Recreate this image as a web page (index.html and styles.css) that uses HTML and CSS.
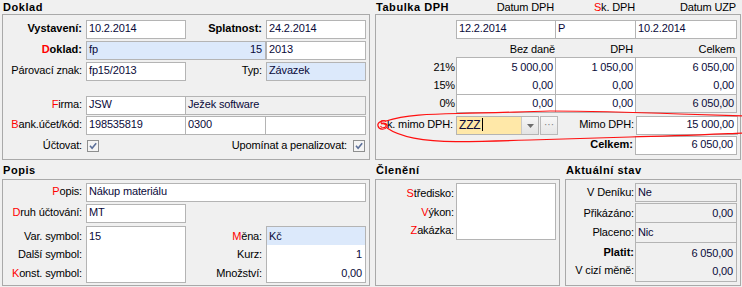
FILE: index.html
```html
<!DOCTYPE HTML>
<html lang="cs">
<head>
    <meta charset="utf-8" />
    <title>Doklad</title>
    <link rel="stylesheet" href="styles.css">
</head>
<body>
    <div class="form">
        <div class="band band-top">
            <section class="panel doklad">
                <div class="ptitle">Doklad</div>
                <div class="pbox">
                    <div class="fr r1">
                        <span class="lb lb-main b">Vystavení:</span>
                        <span class="in w100">10.2.2014</span>
                        <span class="lb lb-mid b">Splatnost:</span>
                        <span class="in w100">24.2.2014</span>
                    </div>
                    <div class="fr">
                        <span class="lb lb-main b"><em>D</em>oklad:</span>
                        <span class="in blue w180 split"><span>fp</span><span>15</span></span>
                        <span class="in w100">2013</span>
                    </div>
                    <div class="fr">
                        <span class="lb lb-main">Párovací znak:</span>
                        <span class="in w100">fp15/2013</span>
                        <span class="lb lb-mid">Typ:</span>
                        <span class="in blue w100">Závazek</span>
                    </div>
                    <div class="fr r-firma">
                        <span class="lb lb-main"><em>F</em>irma:</span>
                        <span class="in w100">JSW</span>
                        <span class="in ro join w181">Ježek software</span>
                    </div>
                    <div class="fr r-bank">
                        <span class="lb lb-main"><em>B</em>ank.účet/kód:</span>
                        <span class="in w100">198535819</span>
                        <span class="in join w81">0300</span>
                        <span class="in join w101"></span>
                    </div>
                    <div class="fr r-check">
                        <span class="lb lb-main">Účtovat:</span>
                        <span class="chk"><svg width="12" height="12" viewBox="0 0 12 12"><rect x="0.5" y="0.5" width="11" height="11" fill="#f4f4f4" stroke="#8e8f8f"/><path d="M3 5.8 L5.1 8.3 L9.2 3.2" fill="none" stroke="#5b6f99" stroke-width="1.6"/></svg></span>
                        <span class="lb grow">Upomínat a penalizovat:</span>
                        <span class="chk chk-end"><svg width="12" height="12" viewBox="0 0 12 12"><rect x="0.5" y="0.5" width="11" height="11" fill="#f4f4f4" stroke="#8e8f8f"/><path d="M3 5.8 L5.1 8.3 L9.2 3.2" fill="none" stroke="#5b6f99" stroke-width="1.6"/></svg></span>
                    </div>
                </div>
            </section>

            <section class="panel dph">
                <div class="ptitle dph-head">
                    <span class="c0">Tabulka DPH</span>
                    <span class="c1 h">Datum DPH</span>
                    <span class="c2 h"><em>S</em>k. DPH</span>
                    <span class="c3 h">Datum UZP</span>
                </div>
                <div class="pbox">
                    <div class="fr r1">
                        <span class="sp80"></span>
                        <span class="in w100">12.2.2014</span>
                        <span class="in join w81">P</span>
                        <span class="in join w102">10.2.2014</span>
                    </div>
                    <div class="colh">
                        <span class="sp80"></span>
                        <span class="c1">Bez daně</span>
                        <span class="c2">DPH</span>
                        <span class="c3">Celkem</span>
                    </div>
                    <div class="vrow first">
                        <span class="vl">21%</span>
                        <span class="vc c1">5 000,00</span>
                        <span class="vc c2">1 050,00</span>
                        <span class="vc c3">6 050,00</span>
                    </div>
                    <div class="vrow">
                        <span class="vl">15%</span>
                        <span class="vc c1">0,00</span>
                        <span class="vc c2">0,00</span>
                        <span class="vc c3">0,00</span>
                    </div>
                    <div class="vrow zero">
                        <span class="vl">0%</span>
                        <span class="vc c1">0,00</span>
                        <span class="vc c2">0,00</span>
                        <span class="vc c3 ro">6 050,00</span>
                    </div>
                    <div class="fr r-mimo">
                        <span class="lb lb-sk"><em>S</em>k. mimo DPH:</span>
                        <span class="combo">
                            <span class="combo-text">ZZZ<i class="caret"></i></span>
                            <span class="combo-btn"><svg width="7" height="4" viewBox="0 0 7 4"><path d="M0 0 H7 L3.5 4 Z" fill="#6d6d6d"/></svg></span>
                        </span>
                        <span class="dots">···</span>
                        <span class="lb lb-mimo">Mimo DPH:</span>
                        <span class="in w102 num">15 000,00</span>
                    </div>
                    <div class="fr r-celk">
                        <span class="lb lb-celk b">Celkem:</span>
                        <span class="in w102 num">6 050,00</span>
                    </div>
                </div>
            </section>
        </div>

        <div class="band band-bottom">
            <section class="panel popis">
                <div class="ptitle">Popis</div>
                <div class="pbox">
                    <div class="fr r-popis">
                        <span class="lb lb-main"><em>P</em>opis:</span>
                        <span class="in w280">Nákup materiálu</span>
                    </div>
                    <div class="fr r-druh">
                        <span class="lb lb-main"><em>D</em>ruh účtování:</span>
                        <span class="in w100">MT</span>
                    </div>
                    <div class="symbols">
                        <div class="lines lb-main">
                            <span>Var. symbol:</span>
                            <span>Další symbol:</span>
                            <span><em>K</em>onst. symbol:</span>
                        </div>
                        <div class="mbox w100">
                            <span>15</span>
                            <span></span>
                            <span></span>
                        </div>
                        <div class="lines lb-mid">
                            <span><em>M</em>ěna:</span>
                            <span>Kurz:</span>
                            <span>Množství:</span>
                        </div>
                        <div class="mbox w100">
                            <span class="blue">Kč</span>
                            <span class="num">1</span>
                            <span class="num">0,00</span>
                        </div>
                    </div>
                </div>
            </section>

            <section class="panel cleneni">
                <div class="ptitle">Členění</div>
                <div class="pbox">
                    <div class="symbols r-clen">
                        <div class="lines lb-80">
                            <span><em>S</em>tředisko:</span>
                            <span><em>V</em>ýkon:</span>
                            <span><em>Z</em>akázka:</span>
                        </div>
                        <div class="mbox w100 h57"></div>
                    </div>
                </div>
            </section>

            <section class="panel stav">
                <div class="ptitle">Aktuální stav</div>
                <div class="pbox">
                    <div class="fr s1">
                        <span class="lb lb-69">V Deníku:</span>
                        <span class="in ro w102">Ne</span>
                    </div>
                    <div class="fr s2">
                        <span class="lb lb-69">Přikázáno:</span>
                        <span class="in ro w102 num">0,00</span>
                    </div>
                    <div class="fr s3">
                        <span class="lb lb-69">Placeno:</span>
                        <span class="in ro w102">Nic</span>
                    </div>
                    <div class="fr s4">
                        <div class="lines lb-69">
                            <span class="b">Platit:</span>
                            <span>V cizí měně:</span>
                        </div>
                        <div class="mbox ro w102">
                            <span class="num">6 050,00</span>
                            <span class="num">0,00</span>
                        </div>
                    </div>
                </div>
            </section>
        </div>

        <!-- red hand-drawn mark over the "mimo DPH" row -->
        <svg class="mark" width="742" height="287" viewBox="0 0 742 287">
            <path d="M386 121 C 405 115, 430 114, 458 113.5 C 500 113, 520 111.5, 550 111 C 600 111, 640 112.5, 680 114 C 710 115, 730 115.5, 745 116"/>
            <path d="M745 133 C 720 134, 680 136, 630 137 C 590 138, 560 139, 530 140 C 500 141, 475 141.5, 456 141.7 C 425 141.5, 400 137, 387 128"/>
            <path d="M386 121 C 381 120, 377 123, 378 126 C 379 130, 385 130, 387 127 C 388 124, 384 122, 381 124"/>
        </svg>
    </div>
</body>
</html>
```

FILE: styles.css
```css
body {
    margin: 0;
    background-color: #f0f0f0;
    font-family: "Liberation Sans", Arial, sans-serif;
    font-size: 11px;
    letter-spacing: -0.15px;
    color: #000;
}

em {
    font-style: normal;
    color: #ff0000;
}

.b {
    font-weight: bold;
    letter-spacing: 0;
}

.form {
    position: relative;
    width: 742px;
    height: 287px;
    padding-left: 2px;
    box-sizing: border-box;
    overflow: hidden;
}

.band {
    display: flex;
    gap: 5px;
}

.band-top {
    height: 160px;
}

.panel {
    display: flex;
    flex-direction: column;
    box-sizing: border-box;
}

.ptitle {
    height: 14px;
    line-height: 14px;
    padding-left: 1px;
    font-weight: bold;
    letter-spacing: 0.55px;
    white-space: nowrap;
}

.band-bottom .ptitle {
    height: 14px;
    margin-top: 3px;
    margin-bottom: 2px;
}

.pbox {
    border: 1px solid #a9a9a9;
    box-sizing: border-box;
    flex: 1;
}

.doklad, .popis { width: 368px; }
.dph { width: 366px; }
.cleneni { width: 185px; }
.stav { width: 176px; }

.doklad .pbox, .dph .pbox { height: 146px; flex: none; }
.band-bottom .pbox { height: 107px; flex: none; }

/* form rows */
.fr {
    display: flex;
    height: 19px;
    margin-top: 2px;
}

.fr.r1 { margin-top: 5px; }
.r-firma { margin-top: 15px; }
.r-bank { margin-top: 1px; }
.r-check { margin-top: 1px; align-items: center; }

.lb {
    box-sizing: border-box;
    text-align: right;
    line-height: 17px;
    white-space: nowrap;
}

.lb-main { flex: 0 0 83px; padding-right: 4px; }
.lb-mid { flex: 0 0 80px; padding-right: 4px; }
.lb-80 { flex: 0 0 80px; padding-right: 2px; }
.lb-69 { flex: 0 0 69px; padding-right: 1px; }
.grow { flex: 1; padding-right: 5px; line-height: 19px; }

.r-check .lb-main { line-height: 19px; }

.in {
    display: block;
    box-sizing: border-box;
    height: 19px;
    border: 1px solid #b4b4b4;
    background: #fff;
    padding: 0 2px;
    line-height: 15px;
    color: #0a0a3a;
    white-space: nowrap;
    overflow: hidden;
}

.in.blue, .blue { background: #dce9fb; }
.in.ro, .mbox.ro { background: #f0f0f0; }
.num { text-align: right; }
.in.num { padding-right: 3px; }

.w100 { width: 100px; }
.w180 { width: 180px; }
.w181 { width: 181px; }
.w81 { width: 81px; }
.w101 { width: 101px; }
.w102 { width: 102px; }
.w280 { width: 280px; }

.join { margin-left: -1px; }

.split {
    display: flex;
    justify-content: space-between;
    padding-right: 3px;
}

.chk {
    display: flex;
    margin-left: 1px;
    width: 12px;
    height: 12px;
}

.chk-end { margin-right: 4px; }

/* VAT table */
.dph-head {
    display: flex;
}

.dph-head .c0 { flex: 0 0 80px; }
.dph-head .h {
    font-weight: normal;
    letter-spacing: -0.15px;
    text-align: right;
    box-sizing: border-box;
}
.dph-head .c1 { flex: 0 0 100px; padding-right: 2px; }
.dph-head .c2 { flex: 0 0 80px; padding-right: 1px; }
.dph-head .c3 { flex: 0 0 101px; padding-right: 1px; }

.sp80 { flex: 0 0 80px; }

.colh {
    display: flex;
    margin-top: 3px;
    margin-bottom: 1px;
    height: 14px;
    line-height: 14px;
}

.colh span { box-sizing: border-box; text-align: right; }
.colh .c1 { flex: 0 0 100px; padding-right: 1px; }
.colh .c2 { flex: 0 0 79px; padding-right: 2px; }
.colh .c3 { flex: 0 0 101px; padding-right: 1px; }

.vrow {
    display: flex;
    height: 18px;
    line-height: 18px;
}

.vrow.first { height: 19px; }
.vrow.zero { height: 19px; line-height: 17px; }

.vl {
    flex: 0 0 80px;
    box-sizing: border-box;
    text-align: right;
    padding-right: 1px;
}

.vrow.first .vl { padding-top: 1px; }
.vrow.zero .vl { padding-top: 1px; }

.vc {
    box-sizing: border-box;
    text-align: right;
    padding-right: 2px;
    background: #fff;
    border-left: 1px solid #b4b4b4;
    color: #0a0a3a;
}

.vc.c1 { flex: 0 0 99px; }
.vc.c2 { flex: 0 0 80px; }
.vc.c3 { flex: 0 0 102px; border-right: 1px solid #b4b4b4; }
.vc.ro { background: #f0f0f0; }

.vrow.first .vc, .vrow.zero .vc { border-top: 1px solid #b4b4b4; }
.vrow.zero .vc { border-bottom: 1px solid #b4b4b4; }

.r-mimo { margin-top: 3px; }
.r-celk { margin-top: 1px; }

.lb-sk { flex: 0 0 80px; padding-right: 3px; }
.lb-mimo { flex: 0 0 78px; padding-right: 2px; }
.lb-celk { flex: 0 0 259px; padding-right: 2px; }

.combo {
    display: flex;
    width: 83px;
    height: 19px;
    box-sizing: border-box;
    border: 1px solid #b4b4b4;
}

.combo-text {
    flex: 1;
    background: #ffe8a8;
    padding-left: 2px;
    line-height: 16px;
    font-size: 12px;
    color: #0a0a3a;
}

.caret {
    display: inline-block;
    width: 1px;
    height: 13px;
    margin-left: 1px;
    vertical-align: -2px;
    background: #000;
}

.combo-btn {
    flex: 0 0 16px;
    display: flex;
    align-items: center;
    justify-content: center;
    border-left: 1px solid #c9c9c9;
    background: linear-gradient(#f6f6f6, #e3e3e3);
}

.dots {
    width: 18px;
    height: 19px;
    margin-left: 1px;
    box-sizing: border-box;
    border: 1px solid #b9b9b9;
    background: linear-gradient(#f7f7f7, #e6e6e6);
    color: #7a7a7a;
    text-align: center;
    line-height: 15px;
    letter-spacing: 0;
    font-size: 10px;
}

/* bottom panels */
.r-popis { margin-top: 3px; }
.r-druh { margin-top: 2px; }

.symbols {
    display: flex;
    margin-top: 3px;
}

.lines {
    display: flex;
    flex-direction: column;
    box-sizing: border-box;
    text-align: right;
    padding-top: 1px;
}

.lines span, .mbox span {
    display: block;
    height: 18.4px;
    line-height: 18.4px;
    white-space: nowrap;
}

.mbox {
    height: 57px;
    box-sizing: border-box;
    border: 1px solid #b4b4b4;
    background: #fff;
    color: #0a0a3a;
}

.mbox span { padding: 0 2px; }
.mbox span.num { padding-right: 3px; }

.r-clen .lines span { height: 18.6px; line-height: 18.6px; }

.stav .fr.s1 { margin-top: 3px; height: 19px; }
.stav .fr.s2 { margin-top: 1px; height: 20px; }
.stav .fr.s3 { margin-top: -1px; height: 21px; }
.stav .fr.s4 { margin-top: -1px; height: 40px; }

.stav .fr .lb { line-height: inherit; }
.s1 { line-height: 19px; }
.s2 { line-height: 20px; }
.s3 { line-height: 21px; }
.stav .in { height: 100%; line-height: inherit; padding-top: 0; }
.s1 .in { line-height: 17px; }
.s2 .in { line-height: 18px; }
.s3 .in { line-height: 19px; }

.s4 .lines, .s4 .mbox { padding-top: 2px; }
.s4 .mbox { height: 40px; }
.s4 .lines span, .s4 .mbox span { height: 17.5px; line-height: 17.5px; }

.mark {
    position: absolute;
    left: 0;
    top: 0;
    pointer-events: none;
    overflow: visible;
}

.mark path {
    fill: none;
    stroke: #ff1010;
    stroke-width: 1.2;
}
```
